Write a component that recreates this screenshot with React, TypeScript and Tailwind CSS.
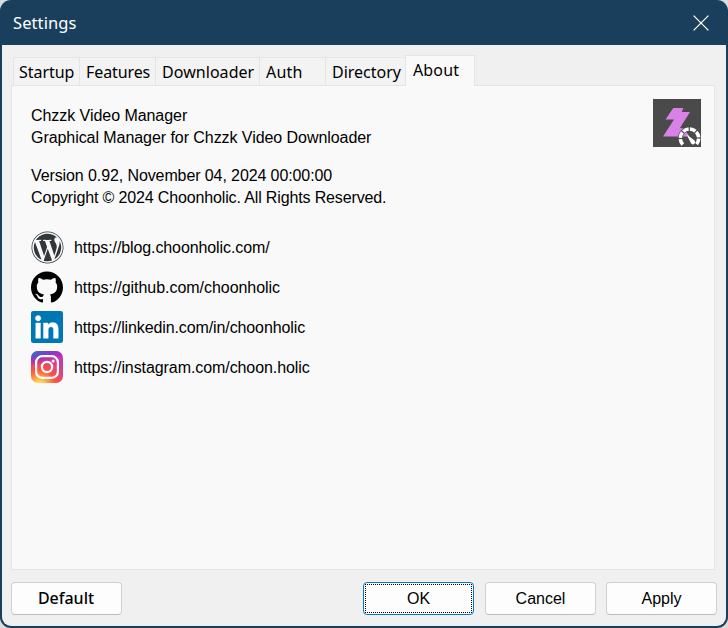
import { FaWordpress } from "react-icons/fa";
import { SiGithub } from "react-icons/si";

const tabs = [
  { label: "Startup", box: "w-[66px] pl-[5px] tracking-[-0.05px]" },
  { label: "Features", box: "w-[76px] pl-[6px] tracking-[-0.1px]" },
  { label: "Downloader", box: "w-[104px] pl-[6px] tracking-[0.05px]" },
  { label: "Auth", box: "w-[66px] pl-[6px] tracking-[0.2px]" },
  { label: "Directory", box: "w-[80px] pl-[6px] tracking-[0px]" },
];

function LinkedInIcon() {
  return (
    <svg viewBox="0 0 24 24" className="size-8">
      <rect width="24" height="24" rx="1.7" fill="#0077b5" />
      <path
        fill="#fff"
        stroke="#fff"
        strokeWidth="0.3"
        d="M20.447 20.452h-3.554v-5.569c0-1.328-.027-3.037-1.852-3.037-1.853 0-2.136 1.445-2.136 2.939v5.667H9.351V9h3.414v1.561h.046c.477-.9 1.637-1.85 3.37-1.85 3.601 0 4.267 2.37 4.267 5.455v6.286zM5.337 7.433c-1.144 0-2.063-.926-2.063-2.065 0-1.138.92-2.063 2.063-2.063 1.14 0 2.064.925 2.064 2.063 0 1.139-.925 2.065-2.064 2.065zm1.782 13.019H3.555V9h3.564v11.452z"
      />
    </svg>
  );
}

function InstagramIcon() {
  return (
    <svg viewBox="0 0 32 32" className="size-8">
      <defs>
        <radialGradient id="ig-warm" cx="8.5" cy="34.5" r="31.7" gradientUnits="userSpaceOnUse">
          <stop offset="0" stopColor="#fd5" />
          <stop offset="0.1" stopColor="#fd5" />
          <stop offset="0.5" stopColor="#ff543e" />
          <stop offset="1" stopColor="#c837ab" />
        </radialGradient>
        <radialGradient
          id="ig-cool"
          cx="0"
          cy="0"
          r="1"
          gradientUnits="userSpaceOnUse"
          gradientTransform="translate(-5.4 2.3) rotate(79) scale(14.2 58.4)"
        >
          <stop offset="0" stopColor="#3771c8" />
          <stop offset="0.128" stopColor="#3771c8" />
          <stop offset="1" stopColor="#60f" stopOpacity="0" />
        </radialGradient>
      </defs>
      <rect width="32" height="32" rx="7" fill="url(#ig-warm)" />
      <rect width="32" height="32" rx="7" fill="url(#ig-cool)" />
      <g fill="none" stroke="#fff" strokeWidth="2.2">
        <rect x="5.1" y="5.1" width="21.8" height="21.8" rx="6.2" />
        <circle cx="16" cy="16" r="5.1" />
      </g>
      <circle cx="22.1" cy="9.9" r="1.5" fill="#fff" />
    </svg>
  );
}

function AppIcon() {
  return (
    <svg viewBox="0 0 48 48" className="size-12 shrink-0">
      <rect width="48" height="48" fill="#4a4a4a" />
      <path d="M20.3 9H30.3L28.8 13H37L27 29L31 29.5L36.5 37.5H10L21 20.5H12.5Z" fill="#d881e6" />
      <path d="M29.8 45.5A9.2 9.2 0 1 1 43.2 45.5" fill="none" stroke="#4a4a4a" strokeWidth="4.6" />
      <path
        d="M29.8 45.5A9.2 9.2 0 1 1 43.2 45.5"
        fill="none"
        stroke="#fff"
        strokeWidth="3.6"
        strokeDasharray="6 1.2"
      />
      <path d="M33.6 35.6L41.6 41.6Q43 44.6 40.4 45.4Q38.4 45.6 37.8 43.8Z" fill="#fff" />
    </svg>
  );
}

const links = [
  {
    url: "https://blog.choonholic.com/",
    icon: <FaWordpress className="-m-[0.5px] size-[33px] text-[#32373c]" />,
    text: "tracking-[-0.1px]",
  },
  { url: "https://github.com/choonholic", icon: <SiGithub className="size-8 text-black" />, text: "tracking-[-0.04px]" },
  { url: "https://linkedin.com/in/choonholic", icon: <LinkedInIcon />, text: "tracking-[-0.11px]" },
  { url: "https://instagram.com/choon.holic", icon: <InstagramIcon />, text: "tracking-[-0.08px]" },
];

const button =
  "h-[33px] w-[111px] rounded-[4px] border border-[#d0d0d0] border-b-[#bcbcbc] bg-[#fdfdfd] text-center leading-[31px]";

export default function App() {
  return (
    <div className="h-[628px] w-[728px] bg-[#dcdcdc]">
      <div className="flex h-full flex-col overflow-hidden rounded-[11px] bg-[#1a3f5c] px-[2px] pb-[2px] font-['Liberation_Sans',Arial,sans-serif] text-[16px] text-black">
        <header className="flex h-[45px] shrink-0 items-center justify-between pr-[17px] pl-[11px] font-['Noto_Sans',sans-serif] text-white">
          <h1 className="pt-px text-[16.5px] tracking-[0.1px]">Settings</h1>
          <svg viewBox="0 0 16 16" className="size-4" stroke="#fff" strokeWidth="1.3">
            <path d="M.6.6l14.8 14.8M15.4.6L.6 15.4" />
          </svg>
        </header>
        <main className="flex flex-1 flex-col rounded-b-[9px] bg-[#f0f0f0] px-[9px]">
          <nav className="z-10 -mb-px flex h-[41px] items-end pl-[2px] font-['Noto_Sans',sans-serif]">
            {tabs.map((tab) => (
              <div
                key={tab.label}
                className={`h-[29px] shrink-0 border-y border-l border-[#e5e5e5] bg-[#f3f3f3] leading-[28px] whitespace-nowrap ${tab.box}`}
              >
                {tab.label}
              </div>
            ))}
            <div className="h-[31px] w-[70px] border border-b-0 border-[#e5e5e5] bg-[#f9f9f9] pl-[7px] leading-[28px] tracking-[0.15px]">
              About
            </div>
          </nav>
          <section className="mr-[2px] flex h-[485px] items-start justify-between border border-[#e5e5e5] bg-[#f9f9f9] pt-[13px] pr-[13px] pl-[19px] leading-[22px]">
            <div className="pt-[6px] whitespace-nowrap">
              <p className="tracking-[-0.05px]">Chzzk Video Manager</p>
              <p className="tracking-[-0.06px]">Graphical Manager for Chzzk Video Downloader</p>
              <p className="mt-4 tracking-[-0.1px]">Version 0.92, November 04, 2024 00:00:00</p>
              <p className="tracking-[-0.14px]">Copyright © 2024 Choonholic. All Rights Reserved.</p>
              <ul className="mt-[22px] flex flex-col gap-2">
                {links.map((link) => (
                  <li key={link.url} className="flex h-8 items-center gap-[11px]">
                    {link.icon}
                    <span className={`pt-[2px] ${link.text}`}>{link.url}</span>
                  </li>
                ))}
              </ul>
            </div>
            <AppIcon />
          </section>
          <footer className="mt-3 flex">
            <button className={`${button} mr-auto pr-px font-['Noto_Sans',sans-serif] font-medium`}>Default</button>
            <button className="h-[33px] w-[111px] rounded-[4px] border border-[#0078d4] bg-[#fdfdfd] p-px">
              <span className="block border border-dotted border-black leading-[27px]">OK</span>
            </button>
            <button className={`${button} ml-[11px]`}>Cancel</button>
            <button className={`${button} ml-[10px]`}>Apply</button>
          </footer>
        </main>
      </div>
    </div>
  );
}
